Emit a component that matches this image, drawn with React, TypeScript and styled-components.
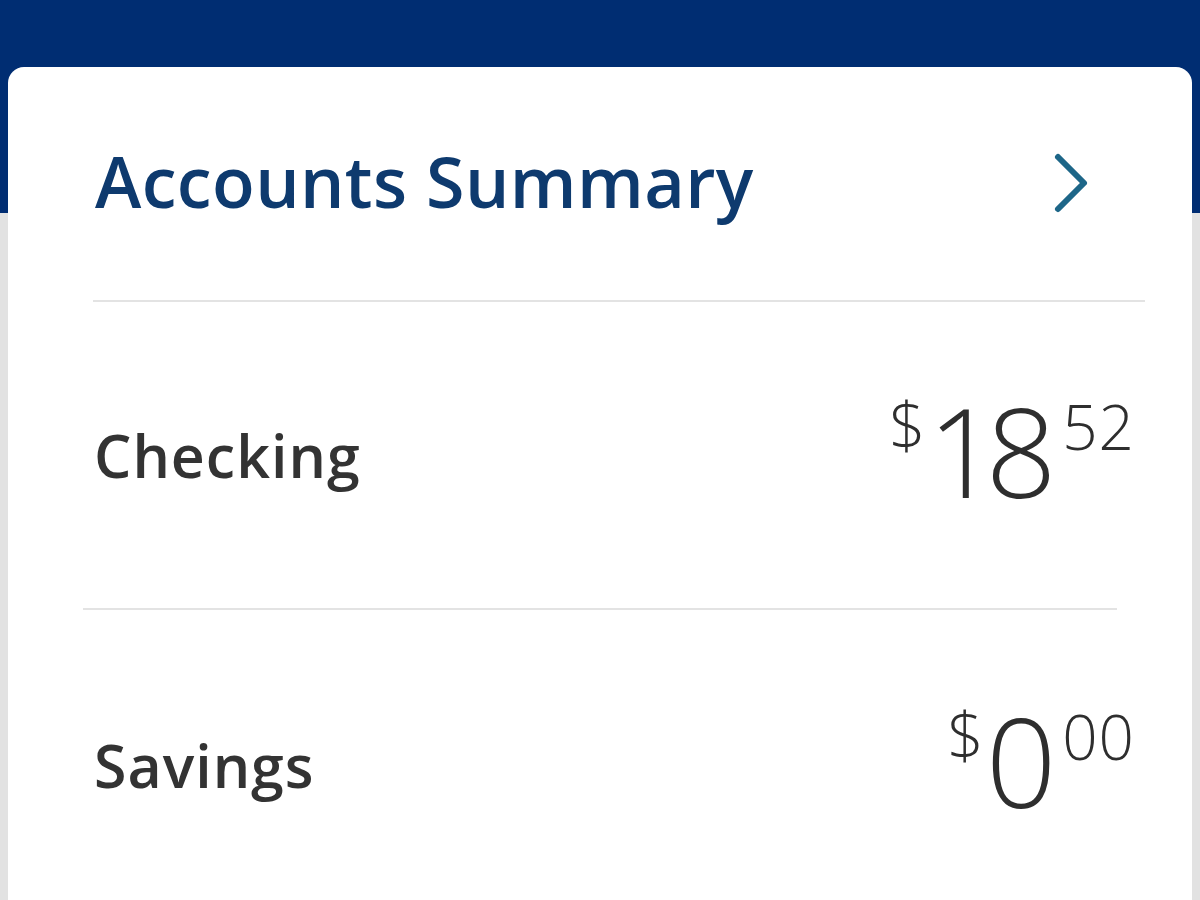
import React from "react";
import styled, { createGlobalStyle } from "styled-components";

const Global = createGlobalStyle`
  html, body { margin: 0; padding: 0; }
  body { background: #dedede; overflow: hidden; }
`;

const Page = styled.div`
  width: 1200px;
  height: 900px;
  overflow: hidden;
  background: linear-gradient(#002d72 0, #002d72 213px, #e2e2e2 213px);
  padding-top: 67px;
  box-sizing: border-box;
`;

const Card = styled.div`
  margin: 0 8px;
  height: 900px;
  background: #ffffff;
  border-radius: 16px 16px 0 0;
  display: flex;
  flex-direction: column;
`;

const HeaderRow = styled.div`
  height: 233px;
  display: flex;
  align-items: center;
  justify-content: space-between;
  padding: 0 100px 0 87px;
`;

const Title = styled.h1`
  margin: 0;
  font-family: "Open Sans", "Liberation Sans", sans-serif;
  font-weight: 600;
  font-size: 70px;
  letter-spacing: 0.4px;
  color: #0e3a6e;
  line-height: 1;
  padding-bottom: 6px;
`;

const Chevron = styled.svg`
  width: 40px;
  height: 64px;
  margin-bottom: 2px;
`;

const Divider = styled.div<{ $left: number; $right: number }>`
  height: 2px;
  background: #e3e3e3;
  margin: 0 ${(p) => p.$right}px 0 ${(p) => p.$left}px;
`;

const AccountRow = styled.div<{ $h: number }>`
  height: ${(p) => p.$h}px;
  display: flex;
  align-items: center;
  justify-content: space-between;
  padding: 0 58px 0 86px;
`;

const AccountName = styled.span`
  font-family: "Open Sans", "Liberation Sans", sans-serif;
  font-weight: 600;
  font-size: 59px;
  letter-spacing: 1px;
  color: #333333;
  line-height: 1;
`;

const Amount = styled.div`
  display: flex;
  align-items: flex-start;
  font-family: "Open Sans", Lato, sans-serif;
  font-weight: 300;
  color: #2e2e2e;
  line-height: 1;
  margin-bottom: 10px;
`;

const Dollar = styled.span`
  font-size: 64px;
  margin-top: 5px;
  margin-right: 2px;
`;

const Whole = styled.span`
  font-size: 124px;
  letter-spacing: -0.1em;
`;

const Cents = styled.span`
  font-size: 62px;
  letter-spacing: 1px;
  margin-top: 7px;
  margin-left: 18px;
  margin-right: -1px;
`;

const Money = ({ whole, cents }: { whole: string; cents: string }) => (
  <Amount>
    <Dollar>$</Dollar>
    <Whole>{whole}</Whole>
    <Cents>{cents}</Cents>
  </Amount>
);

export default function App() {
  return (
    <>
      <Global />
      <Page>
        <Card>
          <HeaderRow>
            <Title>Accounts Summary</Title>
            <Chevron viewBox="0 0 40 64">
              <polyline
                points="6,6 32,32 6,58"
                fill="none"
                stroke="#1d6688"
                strokeWidth="6"
                strokeLinecap="round"
                strokeLinejoin="round"
              />
            </Chevron>
          </HeaderRow>
          <Divider $left={85} $right={47} />
          <AccountRow $h={306}>
            <AccountName>Checking</AccountName>
            <Money whole="18" cents="52" />
          </AccountRow>
          <Divider $left={75} $right={75} />
          <AccountRow $h={310}>
            <AccountName>Savings</AccountName>
            <Money whole="0" cents="00" />
          </AccountRow>
        </Card>
      </Page>
    </>
  );
}
